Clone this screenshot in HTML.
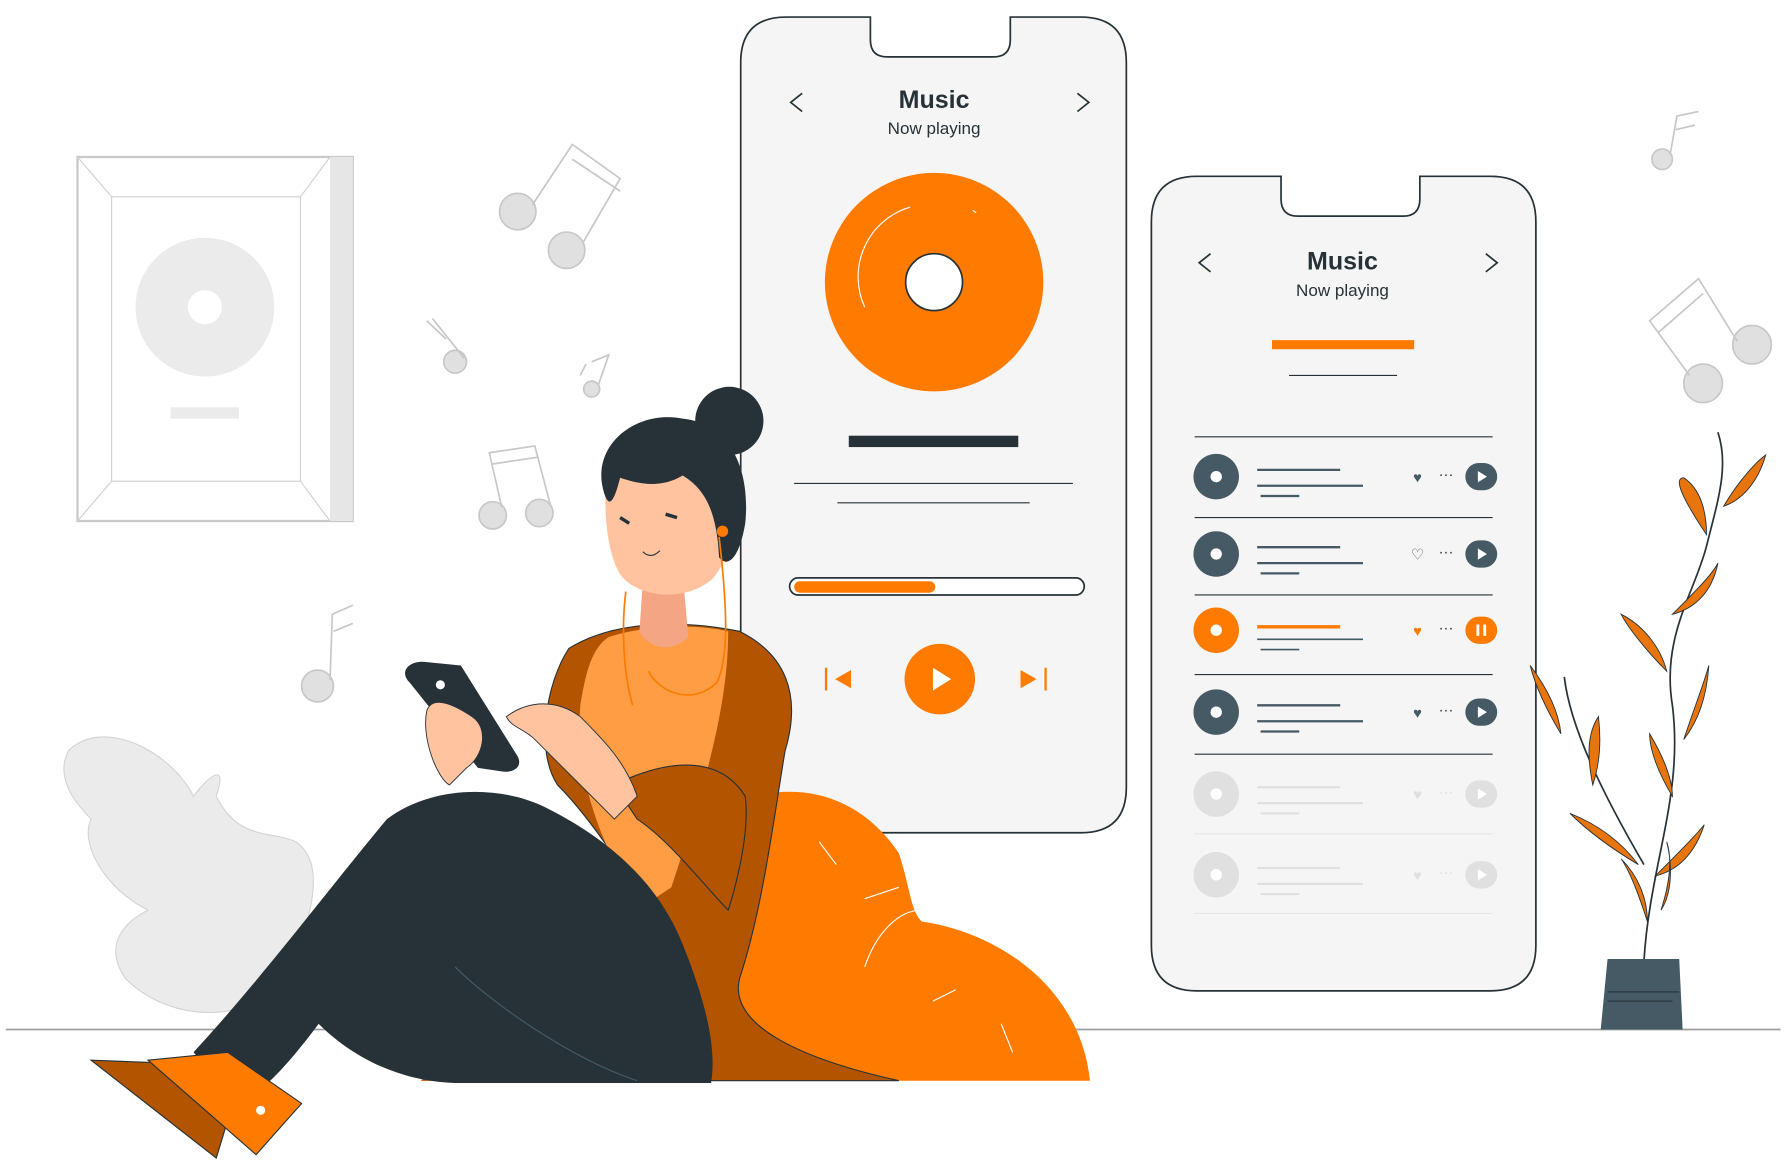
<!DOCTYPE html>
<html><head><meta charset="utf-8"><style>
html,body{margin:0;padding:0;background:#fff;width:1784px;height:1174px;overflow:hidden}
svg{display:block}
text{font-family:"Liberation Sans",sans-serif}
</style></head><body>
<svg width="1784" height="1174" viewBox="0 0 1568 1032" xmlns="http://www.w3.org/2000/svg">
<rect width="1568" height="1032" fill="#fff"/>
<!-- ground -->
<line x1="5" y1="905" x2="1565" y2="905" stroke="#9e9e9e" stroke-width="1.5"/>
<!-- frame -->
<rect x="68" y="138" width="242" height="320" fill="#fff" stroke="#c9c9c9" stroke-width="2"/>
<rect x="290" y="138" width="20" height="320" fill="#e6e6e6"/>
<rect x="98" y="173" width="166" height="250" fill="#fff" stroke="#d0d0d0"/>
<path d="M68 138L98 173M290 138L264 173M68 458L98 423M290 458L264 423" stroke="#d0d0d0" fill="none"/>
<circle cx="180" cy="270" r="61" fill="#ebebeb"/>
<circle cx="180" cy="270" r="15" fill="#fff"/>
<rect x="150" y="358" width="60" height="10" fill="#ebebeb"/>
<!-- leaf left -->
<path d="M60 660C90 630 150 660 170 700C185 680 200 670 190 700C210 740 240 730 260 740C290 760 270 820 250 860C220 900 150 900 110 860C90 830 110 810 130 800C90 780 70 740 80 720C60 700 50 680 60 660Z" fill="#ebebeb" stroke="#d4d4d4"/>
<!-- notes -->
<g fill="#e0e0e0" stroke="#c8c8c8" stroke-width="1.5">
<circle cx="455" cy="186" r="16"/><circle cx="498" cy="220" r="16"/>
<path d="M468 180L503 127L545 157L512 214" fill="none"/><path d="M503 140L545 168" fill="none"/>
<circle cx="400" cy="318" r="10"/><path d="M408 315L380 280M375 282L392 298" fill="none"/>
<circle cx="520" cy="342" r="7"/><path d="M526 338L535 312L520 318M510 330L515 320" fill="none"/>
<circle cx="433" cy="453" r="12"/><circle cx="474" cy="451" r="12"/><path d="M441 446L430 398L470 392L484 445M432 408L472 402" fill="none"/>
<circle cx="279" cy="603" r="14"/><path d="M290 598L292 540L310 532M293 555L310 548" fill="none"/>
<circle cx="1461" cy="140" r="9"/><path d="M1468 136L1474 102L1493 98M1473 114L1490 110" fill="none"/>
<circle cx="1497" cy="337" r="17"/><circle cx="1540" cy="303" r="17"/><path d="M1485 330L1450 282L1493 245L1527 300M1458 292L1497 258" fill="none"/>
</g>
<!-- phone 1 -->
<path d="M691 15H765V35Q765 50 780 50H873Q888 50 888 35V15H950Q990 15 990 55V692Q990 732 950 732H691Q651 732 651 692V55Q651 15 691 15Z" fill="#f5f5f5" stroke="#263238" stroke-width="1.5"/>
<text x="821" y="95" font-size="22" font-weight="bold" fill="#263238" text-anchor="middle">Music</text>
<text x="821" y="118" font-size="15" fill="#263238" text-anchor="middle">Now playing</text>
<path d="M705 82L695 90L705 98M947 82L957 90L947 98" fill="none" stroke="#263238" stroke-width="1.5"/>
<circle cx="821" cy="248" r="96" fill="#ff7b00"/>
<path d="M760 270A64 64 0 0 1 800 182M855 185L858 187" stroke="#fff" fill="none"/>
<circle cx="821" cy="248" r="25" fill="#fff" stroke="#263238" stroke-width="1.5"/>
<rect x="746" y="383" width="149" height="10" fill="#263238"/>
<path d="M698 425H943M736 442H905" stroke="#263238"/>
<rect x="694" y="508" width="259" height="15" rx="7.5" fill="#fff" stroke="#263238" stroke-width="1.5"/>
<rect x="698" y="511" width="124" height="10" rx="5" fill="#ff7b00"/>
<circle cx="826" cy="597" r="31" fill="#ff7b00"/>
<path d="M820 587L836 597L820 607Z" fill="#fff"/>
<path d="M748 589L734 597L748 605Z" fill="#ff7b00"/><path d="M726 587V607" stroke="#ff7b00" stroke-width="2"/>
<path d="M897 589L911 597L897 605Z" fill="#ff7b00"/><path d="M919 587V607" stroke="#ff7b00" stroke-width="2"/>
<!-- phone 2 -->
<path d="M1052 155H1126V175Q1126 190 1141 190H1233Q1248 190 1248 175V155H1310Q1350 155 1350 195V831Q1350 871 1310 871H1052Q1012 871 1012 831V195Q1012 155 1052 155Z" fill="#f5f5f5" stroke="#263238" stroke-width="1.5"/>
<text x="1180" y="237" font-size="22" font-weight="bold" fill="#263238" text-anchor="middle">Music</text>
<text x="1180" y="260" font-size="15" fill="#263238" text-anchor="middle">Now playing</text>
<path d="M1064 223L1054 231L1064 239M1306 223L1316 231L1306 239" fill="none" stroke="#263238" stroke-width="1.5"/>
<rect x="1118" y="299" width="125" height="8" fill="#ff7b00"/>
<path d="M1133 330H1228M1050 384H1312" stroke="#263238"/>
<g id="rows">
<g transform="translate(0,419)"><circle cx="1069" r="20" fill="#455a64"/><circle cx="1069" r="5" fill="#fff"/><path d="M1105 -6H1178M1105 8H1198M1108 17H1142" stroke="#455a64" stroke-width="2"/><text x="1246" y="5" font-size="13" fill="#455a64" text-anchor="middle">♥</text><text x="1271" y="2" font-size="13" fill="#263238" text-anchor="middle">···</text><rect x="1288" y="-12" width="28" height="24" rx="12" fill="#455a64"/><path d="M1299 -5L1307 0L1299 5Z" fill="#fff"/></g>
<path d="M1050 455H1312" stroke="#263238"/>
<g transform="translate(0,487)"><circle cx="1069" r="20" fill="#455a64"/><circle cx="1069" r="5" fill="#fff"/><path d="M1105 -6H1178M1105 8H1198M1108 17H1142" stroke="#455a64" stroke-width="2"/><text x="1246" y="5" font-size="13" fill="#455a64" text-anchor="middle">♡</text><text x="1271" y="2" font-size="13" fill="#263238" text-anchor="middle">···</text><rect x="1288" y="-12" width="28" height="24" rx="12" fill="#455a64"/><path d="M1299 -5L1307 0L1299 5Z" fill="#fff"/></g>
<path d="M1050 523H1312" stroke="#263238"/>
<g transform="translate(0,554)"><circle cx="1069" r="20" fill="#ff7b00"/><circle cx="1069" r="5" fill="#fff"/><path d="M1105 -3H1178" stroke="#ff7b00" stroke-width="3"/><path d="M1105 8H1198M1108 17H1142" stroke="#455a64" stroke-width="1.5"/><text x="1246" y="5" font-size="13" fill="#ff7b00" text-anchor="middle">♥</text><text x="1271" y="2" font-size="13" fill="#263238" text-anchor="middle">···</text><rect x="1288" y="-12" width="28" height="24" rx="12" fill="#ff7b00"/><path d="M1299 -5V5M1305 -5V5" stroke="#fff" stroke-width="2.5"/></g>
<path d="M1050 593H1312" stroke="#263238"/>
<g transform="translate(0,626)"><circle cx="1069" r="20" fill="#455a64"/><circle cx="1069" r="5" fill="#fff"/><path d="M1105 -6H1178M1105 8H1198M1108 17H1142" stroke="#455a64" stroke-width="2"/><text x="1246" y="5" font-size="13" fill="#455a64" text-anchor="middle">♥</text><text x="1271" y="2" font-size="13" fill="#263238" text-anchor="middle">···</text><rect x="1288" y="-12" width="28" height="24" rx="12" fill="#455a64"/><path d="M1299 -5L1307 0L1299 5Z" fill="#fff"/></g>
<path d="M1050 663H1312" stroke="#263238"/>
<g transform="translate(0,698)"><circle cx="1069" r="20" fill="#e0e0e0"/><circle cx="1069" r="5" fill="#fff"/><path d="M1105 -6H1178M1105 8H1198M1108 17H1142" stroke="#e0e0e0" stroke-width="2"/><text x="1246" y="5" font-size="13" fill="#e0e0e0" text-anchor="middle">♥</text><text x="1271" y="2" font-size="13" fill="#e0e0e0" text-anchor="middle">···</text><rect x="1288" y="-12" width="28" height="24" rx="12" fill="#e0e0e0"/><path d="M1299 -5L1307 0L1299 5Z" fill="#fff"/></g>
<path d="M1050 733H1312" stroke="#e6e6e6"/>
<g transform="translate(0,769)"><circle cx="1069" r="20" fill="#e0e0e0"/><circle cx="1069" r="5" fill="#fff"/><path d="M1105 -6H1178M1105 8H1198M1108 17H1142" stroke="#e0e0e0" stroke-width="2"/><text x="1246" y="5" font-size="13" fill="#e0e0e0" text-anchor="middle">♥</text><text x="1271" y="2" font-size="13" fill="#e0e0e0" text-anchor="middle">···</text><rect x="1288" y="-12" width="28" height="24" rx="12" fill="#e0e0e0"/><path d="M1299 -5L1307 0L1299 5Z" fill="#fff"/></g>
<path d="M1050 803H1312" stroke="#e6e6e6"/>
</g>
<!-- plant -->
<path d="M1445 845C1450 760 1480 700 1470 620C1460 560 1490 520 1500 480C1510 440 1520 410 1510 380M1445 760C1410 700 1380 640 1375 595" stroke="#263238" fill="none" stroke-width="1.5"/>
<g fill="#e8740c" stroke="#263238" stroke-width="0.8">
<path d="M1500 470C1480 440 1470 420 1480 420C1495 430 1500 450 1500 470Z"/>
<path d="M1515 445C1530 420 1545 405 1552 400C1545 425 1530 440 1515 445Z"/>
<path d="M1470 540C1490 520 1505 505 1510 495C1505 520 1490 535 1470 540Z"/>
<path d="M1465 590C1445 570 1430 550 1425 540C1445 550 1460 570 1465 590Z"/>
<path d="M1480 650C1490 620 1498 600 1502 585C1500 615 1492 635 1480 650Z"/>
<path d="M1470 700C1458 680 1450 660 1450 645C1462 665 1470 685 1470 700Z"/>
<path d="M1455 770C1475 750 1490 735 1498 725C1490 750 1475 765 1455 770Z"/>
<path d="M1440 760C1415 745 1395 730 1380 715C1405 725 1425 740 1440 760Z"/>
<path d="M1448 810C1440 785 1432 765 1425 755C1440 770 1448 790 1448 810Z"/>
<path d="M1460 800C1468 775 1470 755 1465 740C1470 760 1470 785 1460 800Z"/>
<path d="M1400 690C1395 665 1395 645 1405 630C1408 655 1405 675 1400 690Z"/>
<path d="M1372 645C1360 625 1350 605 1345 585C1360 605 1370 625 1372 645Z"/>
</g>
<path d="M1413 843H1476L1479 905H1407Z" fill="#455a64"/>
<path d="M1413 872H1476M1413 880H1470" stroke="#263238"/>
<!-- beanbag -->
<path d="M370 950C420 880 520 780 620 720C680 680 750 690 790 750C800 780 800 800 810 810C880 820 950 870 958 950Z" fill="#ff7b00"/>
<path d="M760 850C770 820 790 800 810 800M720 740L735 760M820 880L840 870M880 900L890 925M760 790L790 780" stroke="#fff" fill="none"/>
<path d="M370 950C420 900 480 860 520 840L560 950Z" fill="#b35500"/>
<!-- woman torso cardigan -->
<path d="M500 570C540 545 600 545 650 555C690 575 705 610 690 660C680 720 670 800 650 860C640 900 700 930 790 950H620C600 900 590 860 580 820C560 780 520 720 490 690C470 660 480 600 500 570Z" fill="#b35500" stroke="#263238" stroke-width="1"/>
<path d="M535 560C565 550 610 548 640 555C640 620 620 690 590 780L560 800C530 740 505 690 510 620C515 590 520 570 535 560Z" fill="#ff9d45"/>
<path d="M540 690C580 670 630 660 655 700C660 740 640 800 640 800C620 780 590 740 560 720Z" fill="#b35500" stroke="#263238"/>
<!-- legs -->
<path d="M170 925C230 860 290 780 340 720C380 690 440 690 480 710C540 740 580 780 600 830C620 880 630 920 625 952H400C340 950 300 920 280 900C250 940 230 960 210 970Z" fill="#263238"/>
<path d="M400 850C430 880 500 930 560 950" stroke="#455a64" fill="none"/>
<!-- shoes -->
<path d="M80 932L160 935L200 985L190 1018Z" fill="#b35500" stroke="#263238"/>
<path d="M130 932L200 925L265 970L225 1015Z" fill="#ff7b00" stroke="#263238"/>
<circle cx="229" cy="976" r="4" fill="#fff"/>
<!-- neck/head -->
<path d="M565 510L600 505L605 560C590 575 570 570 562 555Z" fill="#f4a583"/>
<path d="M535 400C560 375 610 380 630 410C650 440 645 490 625 510C600 530 560 525 545 505C530 480 530 430 535 400Z" fill="#ffc3a0"/>
<path d="M530 430C520 390 560 360 600 368C640 372 660 410 655 460C650 490 640 500 632 490C630 450 620 430 600 418C580 430 560 425 545 420C540 440 535 450 530 430Z" fill="#263238"/>
<circle cx="641" cy="370" r="30" fill="#263238"/>
<circle cx="635" cy="467" r="5" fill="#ff7b00"/>
<path d="M545 455L553 460M585 452L595 455" stroke="#263238" stroke-width="3"/>
<path d="M565 485Q572 492 580 484" stroke="#263238" fill="none"/>
<path d="M632 472C640 540 640 580 630 600C610 620 580 610 570 590M550 520C545 560 550 600 556 620" stroke="#ff7b00" fill="none" stroke-width="1.5"/>
<!-- phone in hand + arms -->
<path d="M360 600C350 590 360 580 375 582L405 585L455 665C460 675 450 680 440 678L420 675Z" fill="#263238"/>
<circle cx="387" cy="602" r="4" fill="#fff"/>
<path d="M375 625C380 610 400 620 415 630C430 640 425 665 410 675L395 690C385 685 370 650 375 625Z" fill="#ffc3a0" stroke="#263238" stroke-width="0.8"/>
<path d="M445 630C465 615 490 615 510 630C530 650 550 670 560 700L540 720C520 700 490 670 470 650C460 640 450 640 445 630Z" fill="#ffc3a0" stroke="#263238" stroke-width="0.8"/>
</svg>
</body></html>
